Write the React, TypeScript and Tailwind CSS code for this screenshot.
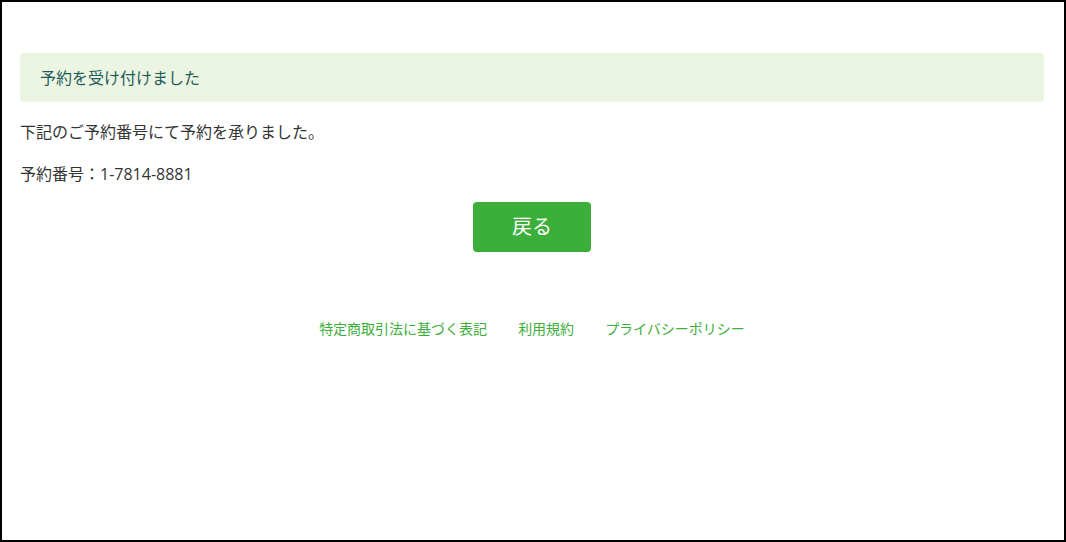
import React from "react";

export default function App() {
  return (
    <div
      className="w-[1066px] h-[542px] border-2 border-black bg-white pl-[18px] pr-[20px] pt-[51px] text-[16px] text-[#333333]"
      style={{ fontFamily: '"Open Sans", "Noto Sans CJK JP", sans-serif' }}
    >
      <div className="h-[49px] rounded-[4px] bg-[#ebf5e1] flex items-center px-5 text-[#1d5b5c] leading-[22px]">
        予約を受け付けました
      </div>
      <p className="mt-[19px] leading-[22px]">下記のご予約番号にて予約を承りました。</p>
      <p className="mt-5 leading-[22px]">予約番号：1-7814-8881</p>
      <div className="mt-[17px] flex justify-center">
        <button className="w-[118px] h-[50px] rounded-[4px] bg-[#3cae3a] text-white text-[20px] flex items-center justify-center">
          戻る
        </button>
      </div>
      <div className="mt-[66px] flex justify-center gap-[31px] text-[14px] leading-[21px] text-[#3cae3a]">
        <a>特定商取引法に基づく表記</a>
        <a>利用規約</a>
        <a>プライバシーポリシー</a>
      </div>
    </div>
  );
}
